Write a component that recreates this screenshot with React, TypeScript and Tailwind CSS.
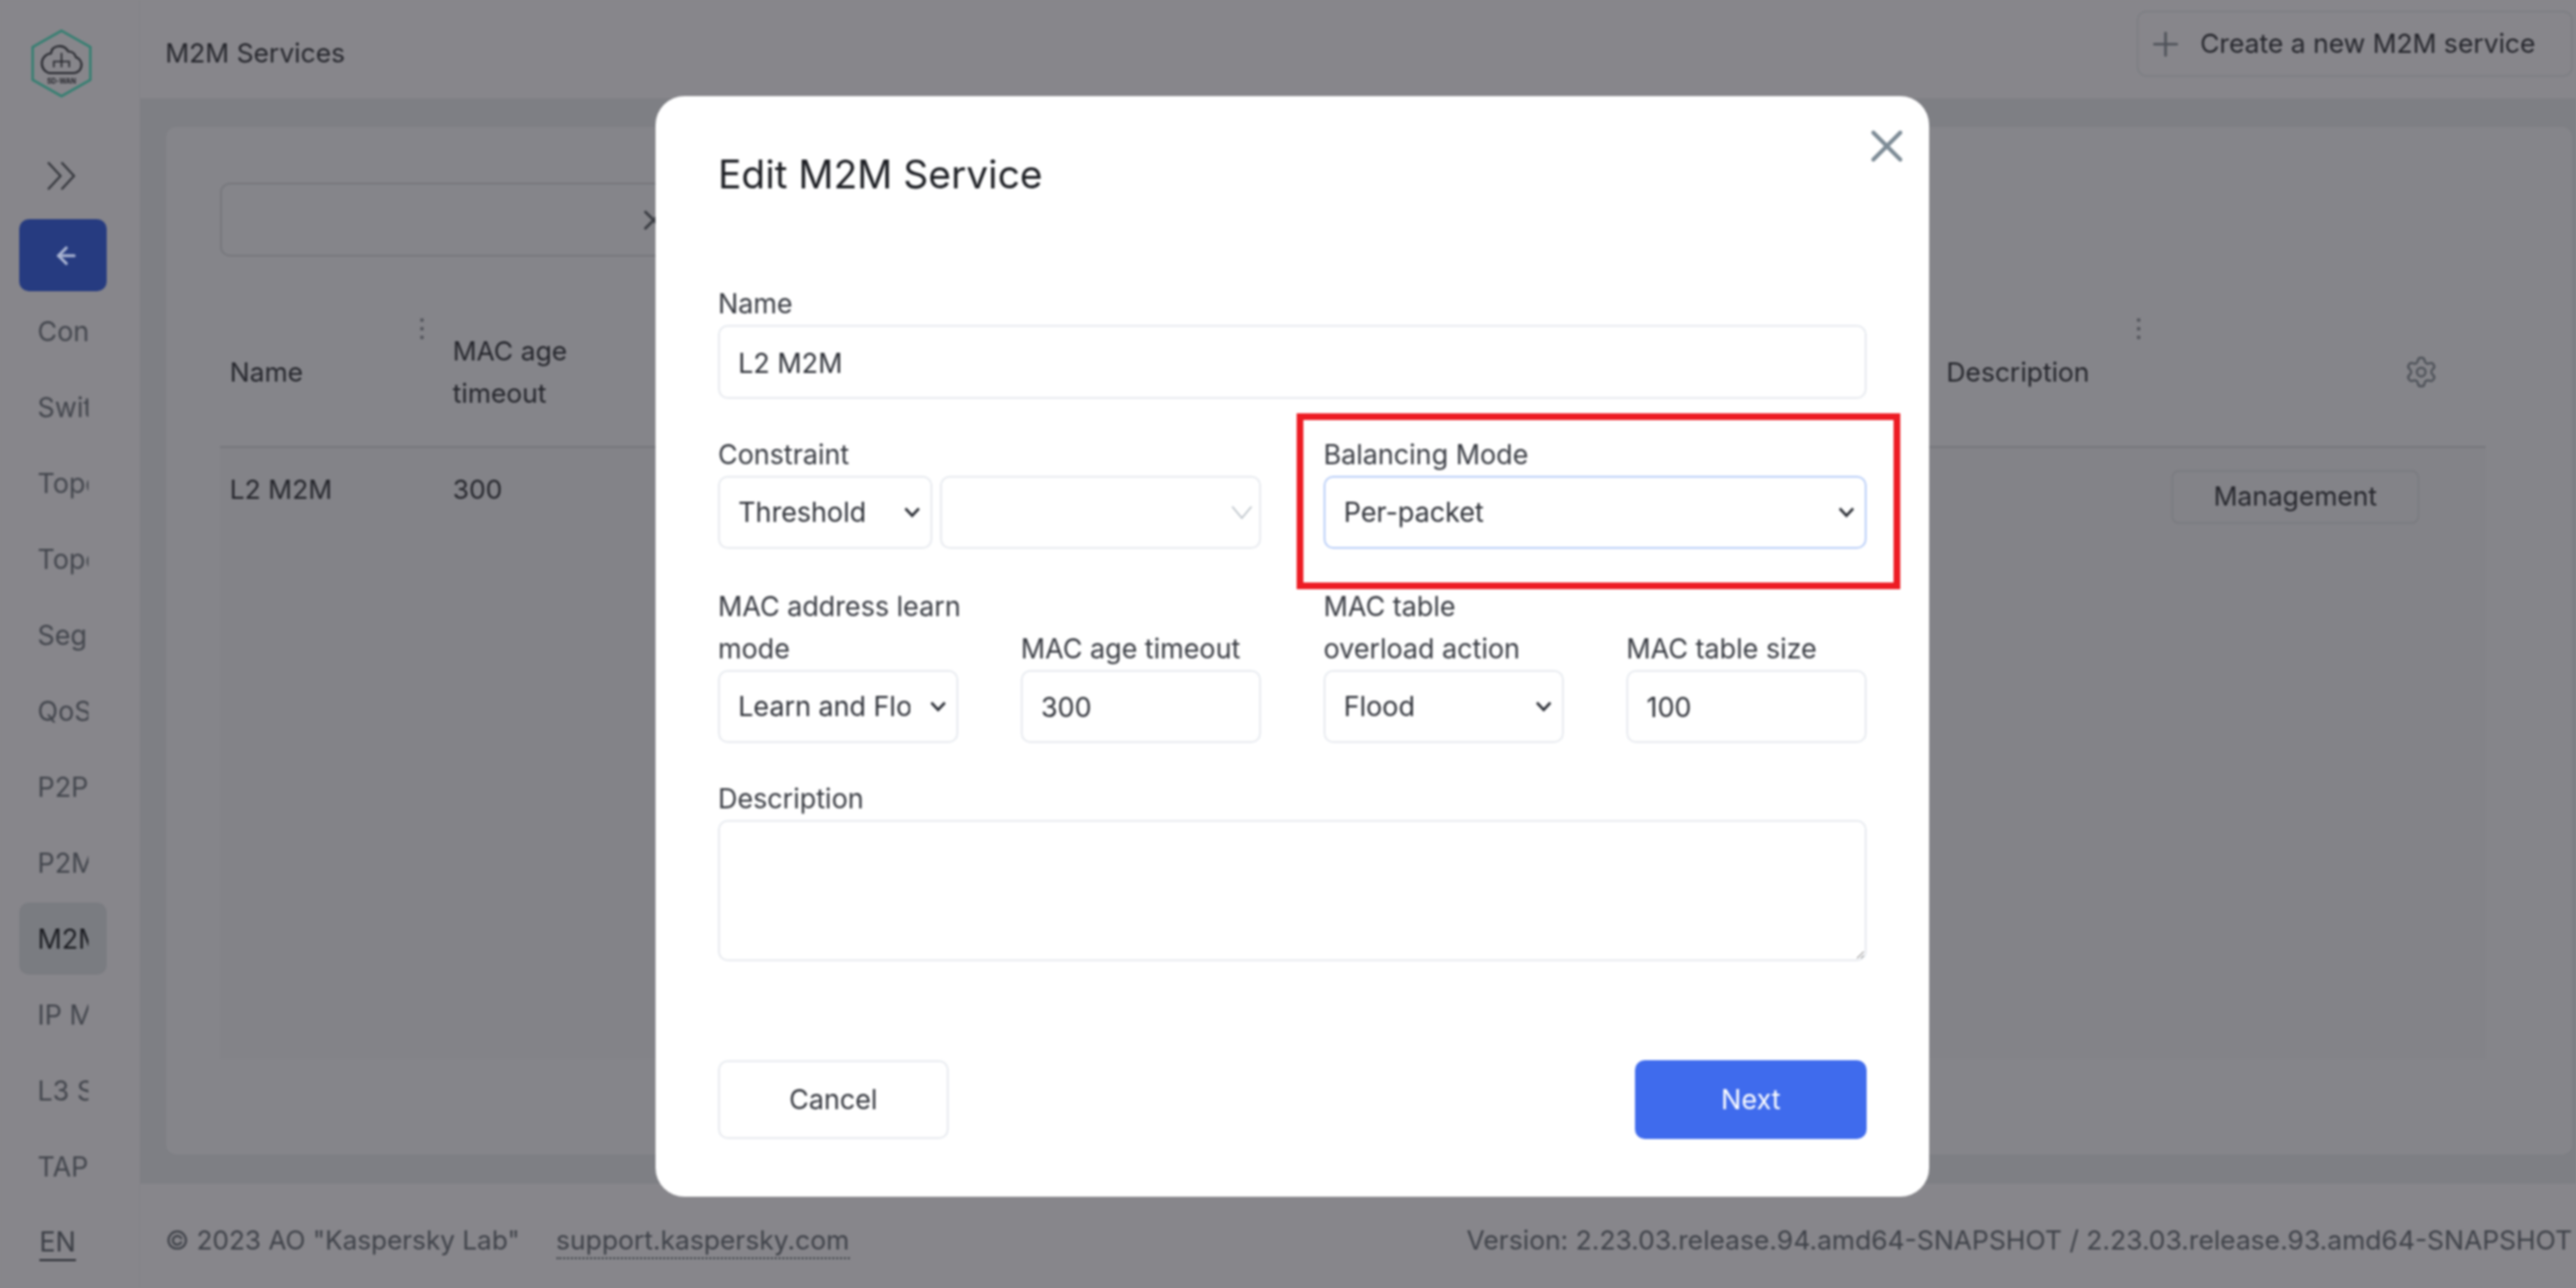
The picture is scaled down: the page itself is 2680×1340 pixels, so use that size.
import { Plus, Settings, X, ArrowLeft } from "lucide-react";

const navItems = [
  "Controllers",
  "Switches",
  "Topology",
  "Topologies",
  "Segments",
  "QoS",
  "P2P Services",
  "P2M Services",
  "M2M Services",
  "IP Multicast",
  "L3 Services",
  "TAP Services",
];

function Chevron({ light = false }: { light?: boolean }) {
  if (light) {
    return (
      <svg width="24" height="16" viewBox="0 0 24 16" fill="none" className="shrink-0 -mr-[4px]">
        <polyline points="2,2 12,14 22,2" stroke="#b9c0c7" strokeWidth="1.6" />
      </svg>
    );
  }
  return (
    <svg width="18" height="12" viewBox="0 0 18 12" fill="none" className="shrink-0">
      <polyline points="2,2 9,9.5 16,2" stroke="#2b2e35" strokeWidth="2.6" />
    </svg>
  );
}

function Logo() {
  return (
    <svg width="64" height="72" viewBox="0 0 64 72" fill="none">
      <polygon points="32,2 62,19 62,53 32,70 2,53 2,19" stroke="#2f7f70" strokeWidth="2.4" />
      <path
        d="M19 46 h26 a8.5 8.5 0 0 0 2 -16.5 a8 8 0 0 0 -8 -6 a10.5 10.5 0 0 0 -16 -3 a10 10 0 0 0 -2 5 a10.5 10.5 0 0 0 -2 20.5 z"
        stroke="#25262c"
        strokeWidth="2.2"
      />
      <path d="M32 25 v15 M24 40 v-6 h16 v6" stroke="#25262c" strokeWidth="1.6" />
      <text x="32" y="57" textAnchor="middle" fontSize="7" fontWeight="700" fill="#25262c">
        SD-WAN
      </text>
    </svg>
  );
}

function ColumnDots() {
  return (
    <div className="flex flex-col gap-[5px] self-start mt-[21px]">
      <span className="w-[4px] h-[4px] rounded-full bg-[#55575d]" />
      <span className="w-[4px] h-[4px] rounded-full bg-[#55575d]" />
      <span className="w-[4px] h-[4px] rounded-full bg-[#55575d]" />
    </div>
  );
}

function Label({ children }: { children: React.ReactNode }) {
  return <div className="text-[28px] leading-[44px] text-[#383b42] whitespace-nowrap">{children}</div>;
}

function Field({ value, className = "h-[77px]" }: { value: string; className?: string }) {
  return (
    <div className={`flex items-center px-[19px] border-2 border-[#e8ebf0] rounded-[10px] text-[28px] text-[#2f3239] ${className}`}>
      <span className="relative top-[1px]">{value}</span>
    </div>
  );
}

function SelectBox({
  value,
  className = "",
  light = false,
}: {
  value: string;
  className?: string;
  light?: boolean;
}) {
  return (
    <div className={`flex items-center justify-between pl-[19px] pr-[10px] h-[76px] border-2 rounded-[10px] text-[28px] text-[#2f3239] ${className}`}>
      <span className="overflow-hidden whitespace-nowrap">{value}</span>
      <span className="ml-[20px] shrink-0 flex">
        <Chevron light={light} />
      </span>
    </div>
  );
}

export default function App() {
  return (
    <div className="w-[2680px] h-[1340px] overflow-hidden bg-[#87868b]">
      <div className="relative w-[2680px] h-[1340px] overflow-hidden flex bg-[#7e7f84] text-[#25262c] font-['Inter','Liberation_Sans',sans-serif] blur-[0.8px]">
        {/* Sidebar */}
        <aside className="w-[146px] shrink-0 flex flex-col bg-[#87868b] border-r border-[#828287]">
          <div className="h-[132px] flex items-start pt-[30px] pl-[32px]">
            <Logo />
          </div>
          <div className="h-[96px] flex items-start pt-[36px] pl-[48px]">
            <svg width="32" height="30" viewBox="0 0 32 30" fill="none">
              <polyline points="2,1 15,15 2,29" stroke="#33353b" strokeWidth="2.2" />
              <polyline points="16,1 29,15 16,29" stroke="#33353b" strokeWidth="2.2" />
            </svg>
          </div>
          <div className="ml-[20px] w-[91px] h-[75px] rounded-[10px] bg-[#263b80] flex items-center justify-center pl-[6px]">
            <ArrowLeft size={28} strokeWidth={2.6} className="text-[#a9b4d2]" />
          </div>
          <nav className="flex flex-col gap-[4px] mt-[4px] ml-[20px] w-[91px]">
            {navItems.map((item) => (
              <div
                key={item}
                className={`h-[75px] px-[19px] flex items-center rounded-[10px] text-[28px] ${
                  item === "M2M Services" ? "bg-[#7a7c81] text-[#1c1d22]" : "text-[#43464d]"
                }`}
              >
                <span className="block overflow-hidden whitespace-nowrap">{item}</span>
              </div>
            ))}
            <div className="h-[75px] pl-[21px] flex items-center text-[28px] text-[#3a3d44]">
              <span className="border-b-2 border-[#2b2d33] leading-[36px]">EN</span>
            </div>
          </nav>
        </aside>

        {/* Main column */}
        <div className="flex-1 min-w-0 flex flex-col">
          <header className="h-[103px] shrink-0 bg-[#87868b] border-b border-[#828287] flex items-start justify-between pl-[26px] pr-[3px]">
            <h1 className="text-[27.5px] leading-[44px] mt-[33px] font-normal">M2M Services</h1>
            <button className="mt-[11px] h-[69px] w-[454px] flex items-center border-2 border-[#7e7f84] rounded-[10px] pl-[8px] text-[27.5px] text-[#25262c]">
              <Plus size={40} strokeWidth={1.6} className="text-[#4e5259]" />
              <span className="ml-[16px]">Create a new M2M service</span>
            </button>
          </header>

          <main className="flex-1 min-h-0 pt-[29px] pb-[30px] pl-[27px] pr-[4px]">
            <div className="h-full bg-[#85858a] rounded-[10px] pt-[58px] pl-[56px] pr-[90px] flex flex-col">
              <div className="w-[480px] h-[77px] border-2 border-[#77787d] rounded-[10px] flex items-center justify-end pr-[10px]">
                <X size={34} strokeWidth={2} className="text-[#3a3c42]" />
              </div>

              <div className="mt-[43px] h-[156px] flex items-center border-b-2 border-[#76777c] text-[27.5px]">
                <div className="w-[208px] pl-[10px] relative top-[1px]">Name</div>
                <ColumnDots />
                <div className="ml-[30px] leading-[44px] w-[200px]">
                  MAC age
                  <br />
                  timeout
                </div>
                <div className="flex-1" />
                <div className="w-[198px] relative top-[1px]">Description</div>
                <ColumnDots />
                <div className="ml-[274px] mr-[49px]">
                  <Settings size={36} strokeWidth={1.5} className="text-[#4e5259]" />
                </div>
              </div>

              <div className="h-[636px] bg-[#838388] flex items-start text-[27.5px]">
                <div className="w-[242px] pl-[10px] pt-[21px] leading-[44px]">L2 M2M</div>
                <div className="pt-[21px] leading-[44px]">300</div>
                <div className="flex-1" />
                <button className="mt-[23px] mr-[69px] w-[258px] h-[56px] border-2 border-[#7b7c81] rounded-[8px] text-[27.5px]">
                  Management
                </button>
              </div>
            </div>
          </main>

          <footer className="h-[109px] shrink-0 bg-[#87868b] border-t border-[#828287] flex items-center justify-between pl-[26px] pr-[4px] pt-[10px] text-[27.5px] text-[#3f4249]">
            <div className="flex items-center">
              <span className="text-[27.2px]">© 2023 AO "Kaspersky Lab"</span>
              <span className="ml-[38px] border-b-2 border-dotted border-[#3f4249] leading-[36px]">support.kaspersky.com</span>
            </div>
            <span>Version: 2.23.03.release.94.amd64-SNAPSHOT / 2.23.03.release.93.amd64-SNAPSHOT</span>
          </footer>
        </div>

        {/* Edit dialog */}
        <div className="absolute inset-0 flex items-start justify-start pt-[100px] pl-[682px]">
          <div className="relative w-[1325px] h-[1145px] bg-white rounded-[30px] pt-[54px] px-[65px] flex flex-col">
            <button className="absolute top-[24px] right-[16px] text-[#7d8b96]">
              <X size={56} strokeWidth={1.8} />
            </button>

            <h2 className="text-[40.5px] leading-[56px] font-normal text-[#1d1f24]">Edit M2M Service</h2>

            <div className="mt-[84px]">
              <Label>Name</Label>
              <Field value="L2 M2M" />
            </div>

            <div className="mt-[36px] grid grid-cols-2 gap-x-[65px]">
              <div>
                <Label>Constraint</Label>
                <div className="flex gap-[8px]">
                  <SelectBox value="Threshold" className="w-[223px] border-[#e8ebf0]" />
                  <SelectBox value="" light className="flex-1 border-[#e8ebf0]" />
                </div>
              </div>
              <div className="relative">
                <Label>Balancing Mode</Label>
                <SelectBox value="Per-packet" className="border-[#bcd0f8]" />
                <div className="absolute -left-[28px] -top-[21px] -right-[35px] -bottom-[42px] border-[7px] border-[#ed1c24] pointer-events-none" />
              </div>
            </div>

            <div className="mt-[38px] grid grid-cols-4 gap-x-[65px] items-end">
              <div>
                <Label>
                  MAC address learn
                  <br />
                  mode
                </Label>
                <SelectBox value="Learn and Flood" className="border-[#e8ebf0]" />
              </div>
              <div>
                <Label>MAC age timeout</Label>
                <Field value="300" className="h-[76px]" />
              </div>
              <div>
                <Label>
                  MAC table
                  <br />
                  overload action
                </Label>
                <SelectBox value="Flood" className="border-[#e8ebf0]" />
              </div>
              <div>
                <Label>MAC table size</Label>
                <Field value="100" className="h-[76px]" />
              </div>
            </div>

            <div className="mt-[36px]">
              <Label>Description</Label>
              <textarea className="block w-full h-[147px] border-2 border-[#e8ebf0] rounded-[10px] outline-none" />
            </div>

            <div className="mt-[103px] flex justify-between">
              <button className="w-[240px] h-[82px] border-2 border-[#e8ebf0] rounded-[10px] text-[28px] text-[#33363d]">
                Cancel
              </button>
              <button className="w-[241px] h-[82px] bg-[#3f6bed] rounded-[10px] text-[28px] text-white">
                Next
              </button>
            </div>
          </div>
        </div>
      </div>
    </div>
  );
}
